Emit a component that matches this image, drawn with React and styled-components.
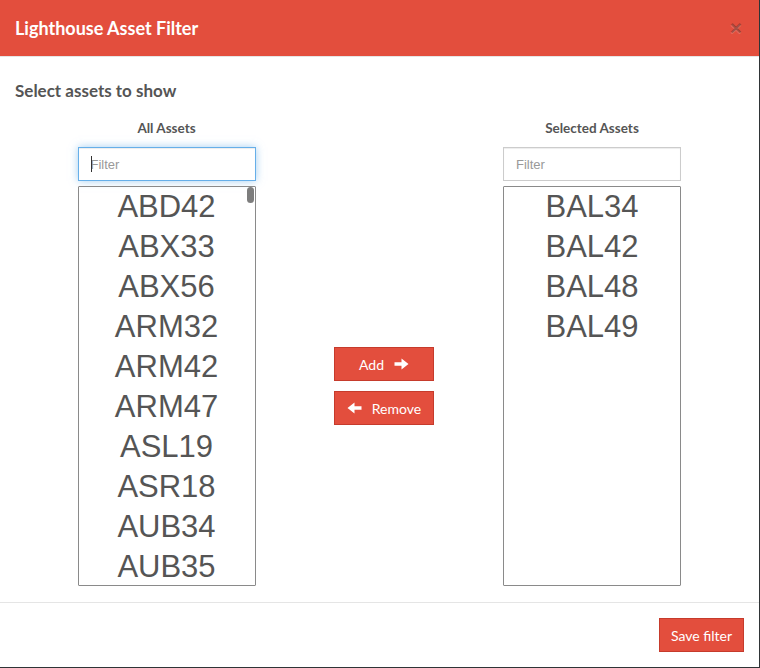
import React from "react";
import styled, { createGlobalStyle } from "styled-components";

const Global = createGlobalStyle`
  html, body { margin: 0; padding: 0; background: #2f3436; }
  body { font-family: Lato, "Helvetica Neue", Arial, sans-serif; }
  * { box-sizing: border-box; }
`;

const Modal = styled.div`
  width: 759px;
  height: 667px;
  background: #fff;
  display: flex;
  flex-direction: column;
`;

const Header = styled.div`
  background: #e34e3d;
  border-bottom: 1px solid #e5e5e5;
  padding: 15px;
  display: flex;
  align-items: center;
  justify-content: space-between;
  height: 57px;
`;

const Title = styled.h4`
  margin: 0;
  font-family: Lato, sans-serif;
  font-weight: 700;
  font-size: 18px;
  line-height: 26px;
  color: #fff;
`;

const Close = styled.span`
  font-family: "Liberation Sans", Arial, sans-serif;
  font-weight: 700;
  font-size: 21px;
  line-height: 1;
  color: rgba(0, 0, 0, 0.28);
  text-shadow: 0 1px 0 rgba(255, 255, 255, 0.2);
  margin-right: 2px;
  margin-top: -1px;
`;

const Body = styled.div`
  flex: 1;
  padding: 15px;
`;

const Heading = styled.h3`
  margin: 9px 0 0;
  font-family: Lato, sans-serif;
  font-weight: 700;
  font-size: 17px;
  line-height: 20px;
  color: #555;
`;

const Columns = styled.div`
  margin-top: 17px;
  display: grid;
  grid-template-columns: 303px 122px 304px;
  grid-template-rows: auto auto auto;
`;

const ColTitle = styled.div`
  grid-column: ${(p) => p.$col};
  grid-row: 1;
  text-align: center;
  font-family: Lato, sans-serif;
  font-weight: 700;
  font-size: 13.5px;
  line-height: 20px;
  color: #555;
`;

const InputWrap = styled.div`
  grid-column: ${(p) => p.$col};
  grid-row: 2;
  margin-top: 9px;
  justify-self: center;
  position: relative;
  width: 178px;
`;

const FilterInput = styled.input`
  display: block;
  width: 178px;
  height: 34px;
  padding: 6px 12px;
  font-family: "Liberation Sans", Arial, sans-serif;
  font-size: 13px;
  color: #555;
  background: #fff;
  border: 1px solid ${(p) => (p.$focused ? "#66afe9" : "#ccc")};
  border-radius: 0;
  outline: none;
  box-shadow: ${(p) =>
    p.$focused
      ? "inset 0 1px 1px rgba(0,0,0,.075), 0 0 8px rgba(102,175,233,.6)"
      : "inset 0 1px 1px rgba(0,0,0,.075)"};
  &::placeholder {
    color: #999;
  }
`;

const Caret = styled.span`
  position: absolute;
  left: 13px;
  top: 9px;
  width: 1px;
  height: 16px;
  background: #333;
`;

const ListBox = styled.div`
  grid-column: ${(p) => p.$col};
  grid-row: 3;
  justify-self: center;
  margin-top: 5px;
  width: 178px;
  height: 400px;
  border: 1px solid #8a8a8a;
  border-radius: 1px;
  position: relative;
  overflow: hidden;
`;

const Item = styled.div`
  height: 40px;
  line-height: 40px;
  text-align: center;
  font-family: "Liberation Sans", Arial, sans-serif;
  font-size: 31px;
  color: #555;
`;

const Thumb = styled.div`
  position: absolute;
  top: 0;
  right: 1px;
  width: 7px;
  height: 16px;
  border-radius: 4px;
  background: #7d7d7d;
`;

const Actions = styled.div`
  grid-column: 2;
  grid-row: 3;
  align-self: center;
  margin-top: 5px;
  padding-left: 16px;
  display: flex;
  flex-direction: column;
  gap: 10px;
`;

const Button = styled.button`
  display: flex;
  align-items: center;
  justify-content: center;
  gap: ${(p) => p.$gap || 9}px;
  width: ${(p) => p.$w}px;
  height: 34px;
  padding: 0 6px;
  white-space: nowrap;
  background: #e34e3d;
  border: 1px solid #c63b2c;
  border-radius: 0;
  color: #fff;
  font-family: Lato, sans-serif;
  font-size: 14px;
  cursor: pointer;
`;

const Arrow = ({ dir }) => (
  <svg width="15" height="12" viewBox="0 0 15 12" style={dir === "left" ? { transform: "scaleX(-1)" } : undefined}>
    <path d="M0.5 4.2 H7.5 V0.5 L14.5 6 L7.5 11.5 V7.8 H0.5 Z" fill="#fff" />
  </svg>
);

const Footer = styled.div`
  border-top: 1px solid #e5e5e5;
  padding: 15px;
  display: flex;
  justify-content: flex-end;
`;

const allAssets = ["ABD42", "ABX33", "ABX56", "ARM32", "ARM42", "ARM47", "ASL19", "ASR18", "AUB34", "AUB35"];
const selected = ["BAL34", "BAL42", "BAL48", "BAL49"];

export default function App() {
  return (
    <>
      <Global />
      <Modal>
        <Header>
          <Title>Lighthouse Asset Filter</Title>
          <Close>×</Close>
        </Header>
        <Body>
          <Heading>Select assets to show</Heading>
          <Columns>
            <ColTitle $col={1}>All Assets</ColTitle>
            <ColTitle $col={3}>Selected Assets</ColTitle>
            <InputWrap $col={1}>
              <FilterInput placeholder="Filter" $focused />
              <Caret />
            </InputWrap>
            <InputWrap $col={3}>
              <FilterInput placeholder="Filter" />
            </InputWrap>
            <ListBox $col={1}>
              {allAssets.map((a) => (
                <Item key={a}>{a}</Item>
              ))}
              <Thumb />
            </ListBox>
            <Actions>
              <Button $w={100} $gap={10}>
                Add <Arrow dir="right" />
              </Button>
              <Button $w={100} $gap={10}>
                <Arrow dir="left" /> Remove
              </Button>
            </Actions>
            <ListBox $col={3}>
              {selected.map((a) => (
                <Item key={a}>{a}</Item>
              ))}
            </ListBox>
          </Columns>
        </Body>
        <Footer>
          <Button $w={85}>Save filter</Button>
        </Footer>
      </Modal>
    </>
  );
}
